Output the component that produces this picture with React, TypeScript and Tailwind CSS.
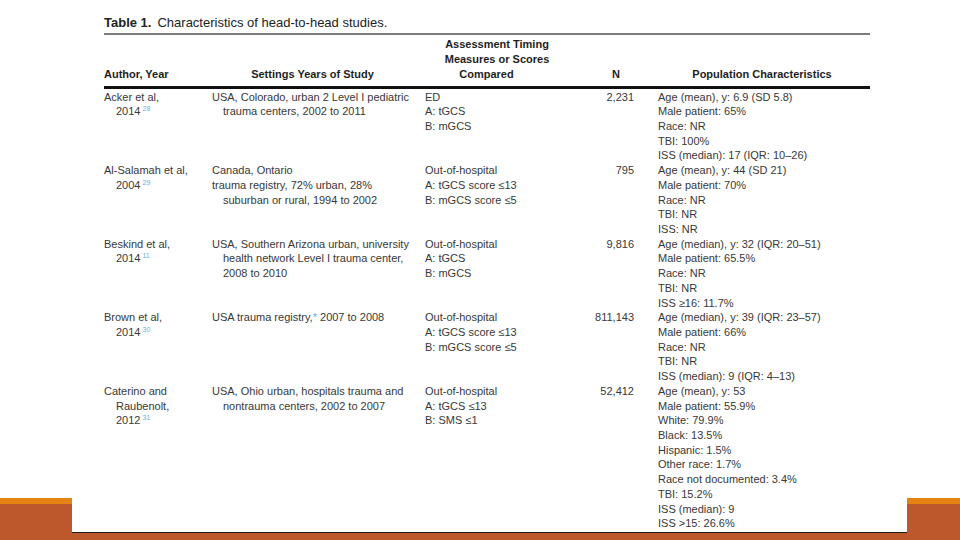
import React from 'react';

type Line = { t: React.ReactNode; indent?: boolean };

type Study = {
  author: Line[];
  settings: Line[];
  assess: string[];
  n: string;
  pop: string[];
};

const Ref: React.FC<{ n: string }> = ({ n }) => (
  <span className="text-[7px] leading-none align-top text-[#5fb3dc] ml-[2px] relative top-[1px]">{n}</span>
);

const studies: Study[] = [
  {
    author: [{ t: 'Acker et al,' }, { t: <>2014<Ref n="28" /></>, indent: true }],
    settings: [
      { t: 'USA, Colorado, urban 2 Level I pediatric' },
      { t: 'trauma centers, 2002 to 2011', indent: true },
    ],
    assess: ['ED', 'A: tGCS', 'B: mGCS'],
    n: '2,231',
    pop: [
      'Age (mean), y: 6.9 (SD 5.8)',
      'Male patient: 65%',
      'Race: NR',
      'TBI: 100%',
      'ISS (median): 17 (IQR: 10–26)',
    ],
  },
  {
    author: [{ t: 'Al-Salamah et al,' }, { t: <>2004<Ref n="29" /></>, indent: true }],
    settings: [
      { t: 'Canada, Ontario' },
      { t: 'trauma registry, 72% urban, 28%' },
      { t: 'suburban or rural, 1994 to 2002', indent: true },
    ],
    assess: ['Out-of-hospital', 'A: tGCS score ≤13', 'B: mGCS score ≤5'],
    n: '795',
    pop: ['Age (mean), y: 44 (SD 21)', 'Male patient: 70%', 'Race: NR', 'TBI: NR', 'ISS: NR'],
  },
  {
    author: [{ t: 'Beskind et al,' }, { t: <>2014<Ref n="11" /></>, indent: true }],
    settings: [
      { t: 'USA, Southern Arizona urban, university' },
      { t: 'health network Level I trauma center,', indent: true },
      { t: '2008 to 2010', indent: true },
    ],
    assess: ['Out-of-hospital', 'A: tGCS', 'B: mGCS'],
    n: '9,816',
    pop: [
      'Age (median), y: 32 (IQR: 20–51)',
      'Male patient: 65.5%',
      'Race: NR',
      'TBI: NR',
      'ISS ≥16: 11.7%',
    ],
  },
  {
    author: [{ t: 'Brown et al,' }, { t: <>2014<Ref n="30" /></>, indent: true }],
    settings: [
      {
        t: (
          <>
            USA trauma registry,<span className="text-[#5fb3dc]">*</span> 2007 to 2008
          </>
        ),
      },
    ],
    assess: ['Out-of-hospital', 'A: tGCS score ≤13', 'B: mGCS score ≤5'],
    n: '811,143',
    pop: [
      'Age (median), y: 39 (IQR: 23–57)',
      'Male patient: 66%',
      'Race: NR',
      'TBI: NR',
      'ISS (median): 9 (IQR: 4–13)',
    ],
  },
  {
    author: [
      { t: 'Caterino and' },
      { t: 'Raubenolt,', indent: true },
      { t: <>2012<Ref n="31" /></>, indent: true },
    ],
    settings: [
      { t: 'USA, Ohio urban, hospitals trauma and' },
      { t: 'nontrauma centers, 2002 to 2007', indent: true },
    ],
    assess: ['Out-of-hospital', 'A: tGCS ≤13', 'B: SMS ≤1'],
    n: '52,412',
    pop: [
      'Age (mean), y: 53',
      'Male patient: 55.9%',
      'White: 79.9%',
      'Black: 13.5%',
      'Hispanic: 1.5%',
      'Other race: 1.7%',
      'Race not documented: 3.4%',
      'TBI: 15.2%',
      'ISS (median): 9',
      'ISS >15: 26.6%',
    ],
  },
];

const Lines: React.FC<{ lines: Line[]; pad: string }> = ({ lines, pad }) => (
  <div>
    {lines.map((l, i) => (
      <div key={i} className={l.indent ? pad : ''}>
        {l.t}
      </div>
    ))}
  </div>
);

const cols = 'grid grid-cols-[108px_213px_135px_74px_24px_212px]';

const Table: React.FC = () => (
  <div className="flex-1 pl-[32px] pr-[37px] pt-[15px] font-['Liberation_Sans',Arial,sans-serif]">
    <div className="text-[13px] leading-[16px] text-[#222] whitespace-nowrap">
      <span className="font-bold">Table 1.</span>
      <span className="ml-[6px]">Characteristics of head-to-head studies.</span>
    </div>
    <div className="mt-[2px] h-[2px] bg-[#7c7c7c]" />
    <div className={`${cols} text-[11px] leading-[15px] font-bold text-[#1e1e1e] whitespace-nowrap pt-[2px] pb-[4px]`}>
      <div className="self-end">Author, Year</div>
      <div className="self-end text-center pr-[12px]">Settings Years of Study</div>
      <div className="text-center pl-[9px]">
        <div>Assessment Timing</div>
        <div>Measures or Scores</div>
        <div className="pr-[21px]">Compared</div>
      </div>
      <div className="self-end text-right pr-[14px]">N</div>
      <div />
      <div className="self-end text-center pr-[4px]">Population Characteristics</div>
    </div>
    <div className="h-[2.5px] bg-[#111]" />
    <div className="text-[11px] leading-[14.72px] text-[#383838] whitespace-nowrap pt-[1px]">
      {studies.map((s, i) => (
        <div key={i} className={cols}>
          <Lines lines={s.author} pad="pl-[12px]" />
          <Lines lines={s.settings} pad="pl-[11px]" />
          <div>
            {s.assess.map((a, j) => (
              <div key={j}>{a}</div>
            ))}
          </div>
          <div className="text-right">{s.n}</div>
          <div />
          <div>
            {s.pop.map((p, j) => (
              <div key={j}>{p}</div>
            ))}
          </div>
        </div>
      ))}
    </div>
  </div>
);

const SideBlock: React.FC<{ width: string }> = ({ width }) => (
  <div className={`${width} flex flex-col justify-end`}>
    <div className="h-[42px] flex flex-col">
      <div className="h-[6px] bg-[#e48312]" />
      <div className="flex-1 bg-[#bd582c]" />
    </div>
  </div>
);

export default function App() {
  return (
    <div className="w-[960px] h-[540px] bg-white flex overflow-hidden">
      <SideBlock width="w-[72px]" />
      <div className="flex-1 flex flex-col">
        <Table />
        <div className="h-px bg-[#1a1a1a]" />
        <div className="h-[7px] bg-[#bd582c]" />
      </div>
      <SideBlock width="w-[53px]" />
    </div>
  );
}
